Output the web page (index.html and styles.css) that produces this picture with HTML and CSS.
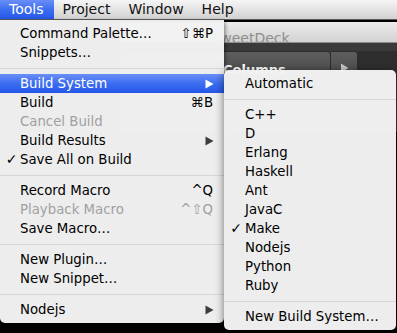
FILE: index.html
```html
<!DOCTYPE html>
<html>
<head>
<meta charset="utf-8">
<link rel="stylesheet" href="styles.css">
</head>
<body>
<div class="menubar">
  <span class="mb-item active">Tools</span>
  <span class="mb-item">Project</span>
  <span class="mb-item">Window</span>
  <span class="mb-item">Help</span>
</div>
<div class="desktop">
  <div class="window">
    <div class="titlebar"><span class="title">TweetDeck</span></div>
    <div class="toolbar">
      <div class="tb-columns">Columns</div>
      <div class="tb-arrow"><svg width="9" height="10" viewBox="0 0 9 10"><path d="M1 0.5 L8.5 5 L1 9.5 Z" fill="#c8c8c8"/></svg></div>
      <div class="tb-rest"></div>
    </div>
  </div>

  <div class="menu main-menu">
    <div class="item"><span class="chk"></span><span class="lbl">Command Palette…</span><span class="key">⇧⌘P</span></div>
    <div class="item"><span class="chk"></span><span class="lbl">Snippets…</span><span class="key"></span></div>
    <div class="sep"></div>
    <div class="item hl"><span class="chk"></span><span class="lbl">Build System</span><span class="key"><svg class="arr" width="9" height="10" viewBox="0 0 9 10"><path d="M0.5 0.5 L8.5 5 L0.5 9.5 Z"/></svg></span></div>
    <div class="item"><span class="chk"></span><span class="lbl">Build</span><span class="key">⌘B</span></div>
    <div class="item dis"><span class="chk"></span><span class="lbl">Cancel Build</span><span class="key"></span></div>
    <div class="item"><span class="chk"></span><span class="lbl">Build Results</span><span class="key"><svg class="arr" width="9" height="10" viewBox="0 0 9 10"><path d="M0.5 0.5 L8.5 5 L0.5 9.5 Z"/></svg></span></div>
    <div class="item"><span class="chk">✓</span><span class="lbl">Save All on Build</span><span class="key"></span></div>
    <div class="sep"></div>
    <div class="item"><span class="chk"></span><span class="lbl">Record Macro</span><span class="key">^Q</span></div>
    <div class="item dis"><span class="chk"></span><span class="lbl">Playback Macro</span><span class="key">^⇧Q</span></div>
    <div class="item"><span class="chk"></span><span class="lbl">Save Macro…</span><span class="key"></span></div>
    <div class="sep"></div>
    <div class="item"><span class="chk"></span><span class="lbl">New Plugin…</span><span class="key"></span></div>
    <div class="item"><span class="chk"></span><span class="lbl">New Snippet…</span><span class="key"></span></div>
    <div class="sep"></div>
    <div class="item"><span class="chk"></span><span class="lbl">Nodejs</span><span class="key"><svg class="arr" width="9" height="10" viewBox="0 0 9 10"><path d="M0.5 0.5 L8.5 5 L0.5 9.5 Z"/></svg></span></div>
  </div>

  <div class="menu sub-menu">
    <div class="item"><span class="chk"></span><span class="lbl">Automatic</span><span class="key"></span></div>
    <div class="sep"></div>
    <div class="item"><span class="chk"></span><span class="lbl">C++</span><span class="key"></span></div>
    <div class="item"><span class="chk"></span><span class="lbl">D</span><span class="key"></span></div>
    <div class="item"><span class="chk"></span><span class="lbl">Erlang</span><span class="key"></span></div>
    <div class="item"><span class="chk"></span><span class="lbl">Haskell</span><span class="key"></span></div>
    <div class="item"><span class="chk"></span><span class="lbl">Ant</span><span class="key"></span></div>
    <div class="item"><span class="chk"></span><span class="lbl">JavaC</span><span class="key"></span></div>
    <div class="item"><span class="chk">✓</span><span class="lbl">Make</span><span class="key"></span></div>
    <div class="item"><span class="chk"></span><span class="lbl">Nodejs</span><span class="key"></span></div>
    <div class="item"><span class="chk"></span><span class="lbl">Python</span><span class="key"></span></div>
    <div class="item"><span class="chk"></span><span class="lbl">Ruby</span><span class="key"></span></div>
    <div class="sep"></div>
    <div class="item"><span class="chk"></span><span class="lbl">New Build System…</span><span class="key"></span></div>
  </div>
</div>
</body>
</html>
```

FILE: styles.css
```css
* { box-sizing: border-box; }
html, body {
  margin: 0;
  padding: 0;
  width: 397px;
  height: 333px;
  overflow: hidden;
  background: #000;
  font-family: "DejaVu Sans", "Liberation Sans", sans-serif;
  font-size: 13.3px;
  color: #000;
}

.menubar {
  height: 20px;
  display: flex;
  align-items: stretch;
  background: linear-gradient(to bottom, #f5f5f5 0%, #e4e4e4 50%, #d0d0d0 100%);
  border-bottom: 1px solid #5a5a5a;
}
.mb-item {
  display: flex;
  align-items: center;
  padding: 0 9px 0 9px;
  line-height: 19px;
  font-size: 14px;
  color: #111;
}
.mb-item.active {
  color: #fff;
  padding: 0 10px 0 9px;
  background: linear-gradient(to bottom, #6a8ef6 0%, #3d6ef0 50%, #2356e8 100%);
}

.desktop {
  position: relative;
  height: 313px;
  background: #000;
}

.window {
  position: absolute;
  left: 120px;
  top: 2px;
  width: 290px;
  height: 110px;
  background: #3a3a3a;
  display: flex;
  flex-direction: column;
}
.titlebar {
  height: 21px;
  background: linear-gradient(to bottom, #ececec, #d3d3d3);
  border-bottom: 1px solid #8d8d8d;
  display: flex;
  align-items: flex-start;
  padding: 9px 0 0 94px;
  overflow: visible;
}
.title {
  color: #8e8e8e;
  font-size: 14px;
  line-height: 1;
}
.toolbar {
  margin-top: 8px;
  display: flex;
  height: 30px;
}
.tb-columns {
  width: 211px;
  background: linear-gradient(to bottom, #5e5e5e, #454545);
  border: 1px solid #2c2c2c;
  border-radius: 0 4px 0 0;
  color: #fff;
  font-weight: bold;
  padding: 11px 0 0 102px;
  font-size: 13px;
  line-height: 1;
}
.tb-arrow {
  width: 27px;
  background: linear-gradient(to bottom, #5e5e5e, #454545);
  border: 1px solid #2c2c2c;
  border-left: none;
  border-radius: 0 4px 0 0;
  display: flex;
  justify-content: center;
  align-items: flex-start;
  padding-top: 11px;
}
.tb-rest {
  flex: 1;
  background: #2e2e2e;
}

.menu {
  position: absolute;
  background: rgba(242, 242, 242, 0.98);
  padding: 4px 0;
}
.main-menu {
  left: 0;
  top: 0;
  width: 224px;
  border-radius: 0 0 5px 5px;
  box-shadow: 1px 2px 4px rgba(0,0,0,0.5);
}
.sub-menu {
  left: 224px;
  top: 50px;
  width: 172px;
  border-radius: 5px;
  box-shadow: 0 2px 8px rgba(0,0,0,0.55);
}

.item {
  height: 19px;
  display: grid;
  grid-template-columns: 20px 1fr auto;
  align-items: center;
  padding-right: 11px;
  line-height: 19px;
  white-space: nowrap;
}
.sub-menu .item { grid-template-columns: 21px 1fr auto; }
.chk {
  text-align: center;
  font-size: 14px;
  padding-left: 3px;
}
.key {
  display: flex;
  align-items: center;
  justify-content: flex-end;
}
.arr {
  fill: #3c3c3c;
  margin-right: -1px;
}
.item.hl {
  background: linear-gradient(to bottom, #6a8ef6 0%, #3d6ef0 50%, #2356e8 100%);
  color: #fff;
}
.item.hl .arr { fill: #fff; }
.item.dis { color: #a0a0a0; }

.sep {
  height: 12px;
  padding-top: 6px;
}
.sep::before {
  content: "";
  display: block;
  height: 1px;
  background: #d6d6d6;
}
```
